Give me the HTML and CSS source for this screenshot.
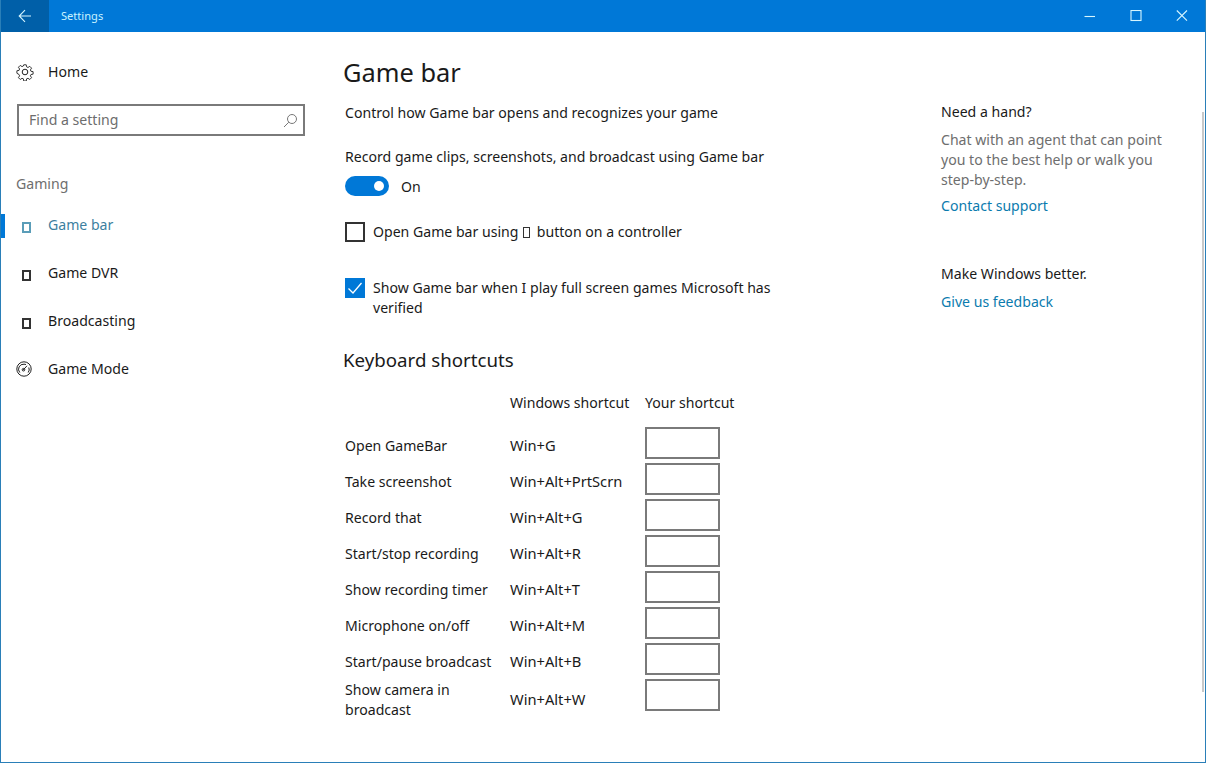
FILE: index.html
```html
<!DOCTYPE html>
<html lang="en">
<head>
<meta charset="utf-8">
<title>Settings</title>
<link rel="stylesheet" href="styles.css">
</head>
<body>
<div class="window">
  <header class="titlebar">
    <div class="back">
      <svg width="16" height="16" viewBox="0 0 16 16" class="line-icon"><path d="M14 8H2.500M8 2.200 2.200 8 8 13.800"/></svg>
    </div>
    <div class="app-title">Settings</div>
    <div class="controls">
      <div class="ctl"><svg width="12" height="12" viewBox="0 0 12 12" class="line-icon"><path d="M.5 6.500h10.500"/></svg></div>
      <div class="ctl"><svg width="12" height="12" viewBox="0 0 12 12" class="line-icon"><rect x="1" y=".5" width="10" height="10"/></svg></div>
      <div class="ctl"><svg width="12" height="12" viewBox="0 0 12 12" class="line-icon"><path d="M.8.500 11 10.700M11 .5.800 10.700"/></svg></div>
    </div>
  </header>
  <div class="body">
    <nav class="sidebar">
      <div class="home">
        <span class="nav-icon">
          <svg width="18" height="18" viewBox="0 0 18 18" class="dark-icon"><circle cx="9" cy="9" r="2.800"/><path d="M7.600 1h2.800l.4 2.300 1.500.7 2-1.300 2 2-1.300 2 .6 1.500 2.400.4v2.800l-2.400.4-.6 1.500 1.300 2-2 2-2-1.300-1.500.6-.4 2.400H7.600l-.4-2.400-1.500-.6-2 1.300-2-2 1.300-2-.6-1.500L0 10.400V7.600l2.400-.4.600-1.500-1.300-2 2-2 2 1.300 1.500-.7z" transform="translate(.9 .9) scale(.9)"/></svg>
        </span>
        <span>Home</span>
      </div>
      <div class="search">
        <span class="search-hint">Find a setting</span>
        <svg width="15" height="15" viewBox="0 0 15 15" class="search-icon"><circle cx="9" cy="6" r="4.500"/><path d="M5.800 9.200 1 14"/></svg>
      </div>
      <div class="group">Gaming</div>
      <ul class="nav">
        <li class="nav-item active"><span class="nav-icon"><span class="tofu"></span></span><span class="nav-label">Game bar</span></li>
        <li class="nav-item"><span class="nav-icon"><span class="tofu"></span></span><span class="nav-label">Game DVR</span></li>
        <li class="nav-item"><span class="nav-icon"><span class="tofu"></span></span><span class="nav-label">Broadcasting</span></li>
        <li class="nav-item"><span class="nav-icon">
          <svg width="16" height="16" viewBox="0 0 16 16" class="dark-icon mode-icon"><circle cx="8" cy="8" r="7.200"/><path d="M3.800 11.500A5 5 0 0 1 8 3.200a5 5 0 0 1 2 .4M12.800 6.500a5 5 0 0 1-.6 5M7 9.200 11 4.800"/><circle cx="7.500" cy="8.700" r="1.300"/></svg>
        </span><span class="nav-label">Game Mode</span></li>
      </ul>
    </nav>
    <main class="main">
      <h1 class="page-title">Game bar</h1>
      <p class="lead">Control how Game bar opens and recognizes your game</p>
      <p class="record">Record game clips, screenshots, and broadcast using Game bar</p>
      <div class="toggle-row">
        <span class="toggle"><span class="knob"></span></span>
        <span class="toggle-state">On</span>
      </div>
      <div class="check-row first">
        <span class="box"></span>
        <span class="check-label">Open Game bar using <span class="tofu small"></span> button on a controller</span>
      </div>
      <div class="check-row second">
        <span class="box checked">
          <svg width="20" height="20" viewBox="0 0 20 20" class="tick"><path d="M3.500 10.500 8 15 16.500 5"/></svg>
        </span>
        <span class="check-label">Show Game bar when I play full screen games Microsoft has verified</span>
      </div>
      <h2 class="section">Keyboard shortcuts</h2>
      <div class="shortcut-head">
        <span class="col-blank"></span>
        <span class="col-win">Windows shortcut</span>
        <span>Your shortcut</span>
      </div>
      <div class="shortcuts">
        <div class="cell">Open GameBar</div><div class="cell win">Win+G</div><div class="key"></div>
        <div class="cell">Take screenshot</div><div class="cell win">Win+Alt+PrtScrn</div><div class="key"></div>
        <div class="cell">Record that</div><div class="cell win">Win+Alt+G</div><div class="key"></div>
        <div class="cell">Start/stop recording</div><div class="cell win">Win+Alt+R</div><div class="key"></div>
        <div class="cell">Show recording timer</div><div class="cell win">Win+Alt+T</div><div class="key"></div>
        <div class="cell">Microphone on/off</div><div class="cell win">Win+Alt+M</div><div class="key"></div>
        <div class="cell">Start/pause broadcast</div><div class="cell win">Win+Alt+B</div><div class="key"></div>
        <div class="cell tall">Show camera in<br>broadcast</div><div class="cell win last">Win+Alt+W</div><div class="key"></div>
      </div>
    </main>
    <aside class="aside">
      <div class="aside-head">Need a hand?</div>
      <p class="aside-text">Chat with an agent that can point you to the best help or walk you step-by-step.</p>
      <a class="link support">Contact support</a>
      <div class="aside-head better">Make Windows better.</div>
      <a class="link feedback">Give us feedback</a>
    </aside>
  </div>
  <div class="scrollbar"></div>
</div>
</body>
</html>
```

FILE: styles.css
```css
* { box-sizing: border-box; }
html, body { margin: 0; padding: 0; }
body {
  width: 1206px;
  height: 763px;
  overflow: hidden;
  background: #fff;
  color: #1a1a1a;
  font-family: "Noto Sans", "Open Sans", sans-serif;
  font-size: 14.1px;
  line-height: 20px;
}
p, h1, h2, ul { margin: 0; padding: 0; }
ul { list-style: none; }

.window {
  position: relative;
  width: 1206px;
  height: 763px;
  display: flex;
  flex-direction: column;
  border: 1px solid #2a7fb8;
  border-top: 0;
}
.titlebar {
  height: 32px;
  flex: none;
  display: flex;
  align-items: center;
  background: #0078d7;
  color: #c8f2ff;
}
.back {
  width: 48px;
  height: 32px;
  display: flex;
  align-items: center;
  justify-content: center;
  background: #005fa8;
}
.line-icon { fill: none; stroke: #d6f6ff; stroke-width: 1.100; }
.app-title { margin-left: 12px; font-size: 11.100px; }
.controls { margin-left: auto; display: flex; }
.ctl {
  width: 46px;
  height: 32px;
  display: flex;
  align-items: center;
  justify-content: center;
}

.body { flex: 1; display: flex; min-height: 0; }
.sidebar { width: 343px; flex: none; padding-top: 30px; }
.home, .nav-item {
  display: flex;
  align-items: center;
  height: 20px;
}
.nav-icon {
  width: 47px;
  flex: none;
  display: flex;
  align-items: center;
  padding-left: 15px;
}
.dark-icon { fill: none; stroke: #222; stroke-width: 1; }
.mode-icon { margin-top: -2px; }
.search {
  margin: 22px 0 0 16px;
  width: 288px;
  height: 32px;
  border: 2px solid #7a7a7a;
  display: flex;
  align-items: center;
  justify-content: space-between;
  padding: 0 5px 0 10px;
}
.search-hint { color: #6d6d6d; }
.search-icon { fill: none; stroke: #777; stroke-width: 1; }
.group { margin: 38px 0 0 15px; color: #6e6e6e; }
.nav { margin-top: 8px; }
.nav-item { position: relative; height: 48px; }
.nav-label { padding-bottom: 2px; }
.nav-item.active { color: #3d7f9f; }
.nav-item.active::before {
  content: "";
  position: absolute;
  left: 0;
  top: 12px;
  width: 4px;
  height: 24px;
  background: #0078d7;
}
.nav-item.active .tofu { border-color: #5a9db8; }
.tofu {
  display: inline-block;
  width: 9px;
  height: 11px;
  margin: 3px 0 0 6px;
  border: 2px solid #333;
}
.tofu.small {
  margin: 0 3px 0 1px;
  width: 7px;
  height: 11px;
  border-width: 1px;
  vertical-align: -1px;
}

.main { width: 597px; flex: none; padding-top: 21px; }
.page-title { font-size: 25.400px; font-weight: 400; line-height: 38px; margin-left: -1px; }
.lead { margin: 12px 0 0 1px; }
.record { margin: 24px 0 0 1px; }
.toggle-row {
  margin: 9px 0 0 1px;
  height: 20px;
  display: flex;
  align-items: center;
  gap: 12px;
}
.toggle-state { padding-top: 2px; }
.toggle {
  width: 44px;
  height: 20px;
  border-radius: 10px;
  background: #0078d7;
  display: flex;
  align-items: center;
  justify-content: flex-end;
  padding-right: 5px;
}
.knob { width: 10px; height: 10px; border-radius: 50%; background: #fff; }
.check-row { display: flex; gap: 8px; margin-left: 1px; width: 430px; }
.check-row.first { margin-top: 26px; }
.check-row.second { margin-top: 36px; }
.box {
  width: 20px;
  height: 20px;
  flex: none;
  border: 2px solid #333;
  display: block;
}
.box.checked { border: 0; background: #0078d7; }
.tick { display: block; fill: none; stroke: #fff; stroke-width: 1.300; }
.section { font-size: 18.700px; font-weight: 400; line-height: 28px; margin-top: 28px; margin-left: -1px; }
.shortcut-head { display: flex; margin: 19px 0 0 1px; }
.col-blank { width: 165px; }
.col-win { width: 135px; }
.shortcuts {
  display: grid;
  grid-template-columns: 165px 135px 75px;
  grid-auto-rows: 32px;
  row-gap: 4px;
  margin: 14px 0 0 1px;
}
.cell { padding-top: 9px; white-space: nowrap; }
.cell.win { font-size: 14.700px; padding-top: 8px; }
.cell.tall { padding-top: 1px; }
.cell.win.last { padding-top: 10px; }
.key { border: 2px solid #7a7a7a; }

.aside { flex: 1; padding-top: 70px; }
.aside-head { line-height: 20px; }
.aside-text { margin-top: 8px; width: 235px; color: #6e6e6e; }
.link { display: block; color: #0b7bae; }
.support { margin-top: 6px; }
.better { margin-top: 48px; }
.feedback { margin-top: 8px; }
.scrollbar {
  position: absolute;
  right: 1px;
  top: 112px;
  width: 2px;
  height: 580px;
  background: #c9c9c9;
}
```
